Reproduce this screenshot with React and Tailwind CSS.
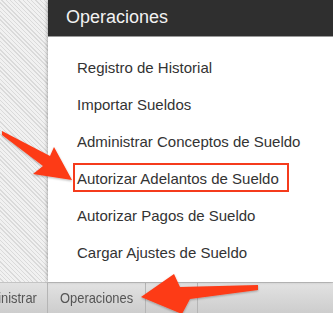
import React from "react";

const items = [
  "Registro de Historial",
  "Importar Sueldos",
  "Administrar Conceptos de Sueldo",
  "Autorizar Adelantos de Sueldo",
  "Autorizar Pagos de Sueldo",
  "Cargar Ajustes de Sueldo",
];

export default function App() {
  return (
    <div
      className="relative w-[333px] h-[313px] overflow-hidden flex flex-col bg-white"
      style={{ fontFamily: '"Liberation Sans", Arial, sans-serif' }}
    >
      <div className="flex flex-1 min-h-0">
        <div className="w-[48px] shrink-0 bg-[image:repeating-linear-gradient(45deg,#f1f1f1_0px,#f1f1f1_2px,#dadada_2px,#dadada_3px)]" />
        <div className="flex-1 flex flex-col bg-white shadow-[-1px_0_3px_rgba(0,0,0,0.25)] z-10">
          <div className="h-[37px] shrink-0 bg-[#2f2f2f] border-b border-[#9a9a9a] pl-[18px]">
            <span className="text-[18px] leading-[34px] text-[#f2f2f2]">Operaciones</span>
          </div>
          <ul className="pt-[12px] pl-[29px]">
            {items.map((t) => (
              <li key={t} className="text-[15px] leading-[37px] text-[#333333] whitespace-nowrap">
                {t}
              </li>
            ))}
          </ul>
        </div>
      </div>
      <div className="h-[31px] shrink-0 flex bg-gradient-to-b from-[#e2e2e2] to-[#cdcdcd] border-t border-[#c4c4c4] text-[15px] leading-[30px] text-[#555555]">
        <div className="w-[48px] shrink-0 overflow-hidden border-r border-[#b5b5b5] flex justify-end pr-[10px]">
          <span className="inline-block whitespace-nowrap scale-x-[0.86] origin-right">Administrar</span>
        </div>
        <div className="w-[98px] shrink-0 border-r border-[#b5b5b5] pl-[12px] overflow-hidden">
          <span className="inline-block whitespace-nowrap scale-x-[0.86] origin-left">Operaciones</span>
        </div>
        <div className="w-[52px] shrink-0 border-r border-[#b5b5b5] relative">
          <div className="absolute left-[32px] top-[17px] w-[3px] h-[6px] bg-[#333]" />
        </div>
        <div className="flex-1" />
      </div>

      <div className="absolute left-[73px] top-[163px] w-[216px] h-[29px] border-2 border-[#f53b1c] z-20" />

      <svg
        className="absolute left-0 top-0 z-30 pointer-events-none"
        width="333"
        height="313"
        viewBox="0 0 333 313"
      >
        <defs>
          <filter id="sh" x="-20%" y="-20%" width="140%" height="140%">
            <feDropShadow dx="0" dy="1" stdDeviation="1" floodColor="#000" floodOpacity="0.3" />
          </filter>
        </defs>
        <polygon
          points="2,131 50,156 54,147 72,180 33,174 43,166 2,135"
          fill="#fd3a17"
          filter="url(#sh)"
        />
        <polygon
          points="141,297 174,274 180,287 258,285 258,290 190,299 182,314"
          fill="#fd3a17"
          filter="url(#sh)"
        />
      </svg>
    </div>
  );
}
